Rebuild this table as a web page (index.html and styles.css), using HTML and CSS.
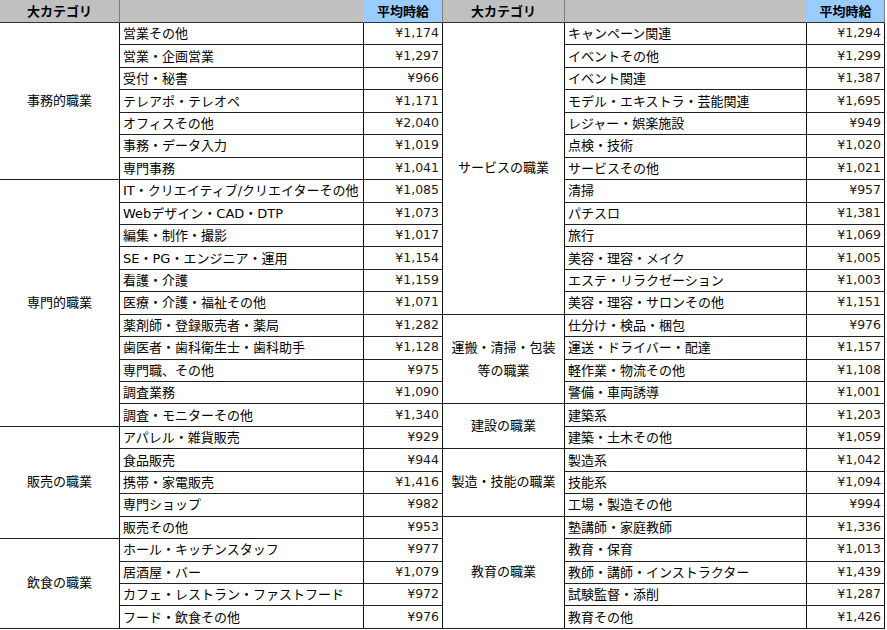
FILE: index.html
```html
<!DOCTYPE html>
<html lang="ja">
<head>
<meta charset="utf-8">
<title>平均時給</title>
<link rel="stylesheet" href="styles.css">
</head>
<body>
<div class="page">
  <div class="sheet sheet-left">
    <div class="hd hd-cat">大カテゴリ</div>
    <div class="hd hd-sub"></div>
    <div class="hd hd-pay">平均時給</div>

    <div class="grp g7">事務的職業</div>
    <div class="sub">営業その他</div><div class="pay">¥1,174</div>
    <div class="sub">営業・企画営業</div><div class="pay">¥1,297</div>
    <div class="sub">受付・秘書</div><div class="pay">¥966</div>
    <div class="sub">テレアポ・テレオペ</div><div class="pay">¥1,171</div>
    <div class="sub">オフィスその他</div><div class="pay">¥2,040</div>
    <div class="sub">事務・データ入力</div><div class="pay">¥1,019</div>
    <div class="sub">専門事務</div><div class="pay">¥1,041</div>

    <div class="grp g11">専門的職業</div>
    <div class="sub">IT・クリエイティブ/クリエイターその他</div><div class="pay">¥1,085</div>
    <div class="sub">Webデザイン・CAD・DTP</div><div class="pay">¥1,073</div>
    <div class="sub">編集・制作・撮影</div><div class="pay">¥1,017</div>
    <div class="sub">SE・PG・エンジニア・運用</div><div class="pay">¥1,154</div>
    <div class="sub">看護・介護</div><div class="pay">¥1,159</div>
    <div class="sub">医療・介護・福祉その他</div><div class="pay">¥1,071</div>
    <div class="sub">薬剤師・登録販売者・薬局</div><div class="pay">¥1,282</div>
    <div class="sub">歯医者・歯科衛生士・歯科助手</div><div class="pay">¥1,128</div>
    <div class="sub">専門職、その他</div><div class="pay">¥975</div>
    <div class="sub">調査業務</div><div class="pay">¥1,090</div>
    <div class="sub">調査・モニターその他</div><div class="pay">¥1,340</div>

    <div class="grp g5">販売の職業</div>
    <div class="sub">アパレル・雑貨販売</div><div class="pay">¥929</div>
    <div class="sub">食品販売</div><div class="pay">¥944</div>
    <div class="sub">携帯・家電販売</div><div class="pay">¥1,416</div>
    <div class="sub">専門ショップ</div><div class="pay">¥982</div>
    <div class="sub">販売その他</div><div class="pay">¥953</div>

    <div class="grp g4">飲食の職業</div>
    <div class="sub">ホール・キッチンスタッフ</div><div class="pay">¥977</div>
    <div class="sub">居酒屋・バー</div><div class="pay">¥1,079</div>
    <div class="sub">カフェ・レストラン・ファストフード</div><div class="pay">¥972</div>
    <div class="sub">フード・飲食その他</div><div class="pay">¥976</div>
  </div>

  <div class="sheet sheet-right">
    <div class="hd hd-cat">大カテゴリ</div>
    <div class="hd hd-sub"></div>
    <div class="hd hd-pay">平均時給</div>

    <div class="grp g13">サービスの職業</div>
    <div class="sub">キャンペーン関連</div><div class="pay">¥1,294</div>
    <div class="sub">イベントその他</div><div class="pay">¥1,299</div>
    <div class="sub">イベント関連</div><div class="pay">¥1,387</div>
    <div class="sub">モデル・エキストラ・芸能関連</div><div class="pay">¥1,695</div>
    <div class="sub">レジャー・娯楽施設</div><div class="pay">¥949</div>
    <div class="sub">点検・技術</div><div class="pay">¥1,020</div>
    <div class="sub">サービスその他</div><div class="pay">¥1,021</div>
    <div class="sub">清掃</div><div class="pay">¥957</div>
    <div class="sub">パチスロ</div><div class="pay">¥1,381</div>
    <div class="sub">旅行</div><div class="pay">¥1,069</div>
    <div class="sub">美容・理容・メイク</div><div class="pay">¥1,005</div>
    <div class="sub">エステ・リラクゼーション</div><div class="pay">¥1,003</div>
    <div class="sub">美容・理容・サロンその他</div><div class="pay">¥1,151</div>

    <div class="grp g4">運搬・清掃・包装<br>等の職業</div>
    <div class="sub">仕分け・検品・梱包</div><div class="pay">¥976</div>
    <div class="sub">運送・ドライバー・配達</div><div class="pay">¥1,157</div>
    <div class="sub">軽作業・物流その他</div><div class="pay">¥1,108</div>
    <div class="sub">警備・車両誘導</div><div class="pay">¥1,001</div>

    <div class="grp g2">建設の職業</div>
    <div class="sub">建築系</div><div class="pay">¥1,203</div>
    <div class="sub">建築・土木その他</div><div class="pay">¥1,059</div>

    <div class="grp g3">製造・技能の職業</div>
    <div class="sub">製造系</div><div class="pay">¥1,042</div>
    <div class="sub">技能系</div><div class="pay">¥1,094</div>
    <div class="sub">工場・製造その他</div><div class="pay">¥994</div>

    <div class="grp g5">教育の職業</div>
    <div class="sub">塾講師・家庭教師</div><div class="pay">¥1,336</div>
    <div class="sub">教育・保育</div><div class="pay">¥1,013</div>
    <div class="sub">教師・講師・インストラクター</div><div class="pay">¥1,439</div>
    <div class="sub">試験監督・添削</div><div class="pay">¥1,287</div>
    <div class="sub">教育その他</div><div class="pay">¥1,426</div>
  </div>
</div>
</body>
</html>
```

FILE: styles.css
```css
* { box-sizing: border-box; }

html, body {
  margin: 0;
  padding: 0;
  background: #ffffff;
}

body {
  font-family: "DejaVu Sans", "Noto Sans CJK JP", sans-serif;
  font-size: 13px;
  color: #000000;
}

.page {
  display: flex;
  align-items: flex-start;
  width: 887px;
  height: 630px;
  overflow: hidden;
}

.sheet {
  display: grid;
  grid-template-rows: 23px repeat(27, 22.44px);
}

.sheet-left {
  grid-template-columns: 119px 244px 79px;
}

.sheet-right {
  grid-template-columns: 122px 242px 79px;
}

.hd {
  display: flex;
  align-items: center;
  justify-content: center;
  background: #c0c0c0;
  border-bottom: 1px solid #333333;
  font-family: "Noto Sans CJK JP", sans-serif;
  font-weight: bold;
  font-size: 13px;
  color: #000000;
  padding-bottom: 1px;
}

.hd-sub {
  border-left: 1px solid #7f7f7f;
}

.hd-pay {
  background: #99ccff;
  border-left: 1px solid #99ccff;
  border-right: 1px solid #7f7f7f;
}

.sheet-left .hd-pay {
  border-right: 0;
}

.sheet-right .hd-cat {
  border-left: 1px solid #7f7f7f;
}

.grp {
  grid-column: 1;
  display: flex;
  align-items: center;
  justify-content: center;
  text-align: center;
  line-height: 23px;
  padding-bottom: 3px;
  font-family: "Noto Sans CJK JP", sans-serif;
  border-bottom: 1px solid #222222;
}

.sheet-right .grp {
  border-left: 1px solid #111111;
}

.g2 { grid-row: span 2; }
.g3 { grid-row: span 3; }
.g4 { grid-row: span 4; }
.g5 { grid-row: span 5; }
.g7 { grid-row: span 7; }
.g11 { grid-row: span 11; }
.g13 { grid-row: span 13; }

.sub {
  grid-column: 2;
  display: flex;
  align-items: center;
  padding-left: 3px;
  padding-bottom: 2px;
  white-space: nowrap;
  border-left: 1px solid #111111;
  border-bottom: 1px solid #222222;
}

.pay {
  grid-column: 3;
  display: flex;
  align-items: center;
  justify-content: flex-end;
  padding-right: 3px;
  padding-bottom: 2px;
  font-size: 12.5px;
  color: #1a1a1a;
  border-left: 1px solid #111111;
  border-bottom: 1px solid #222222;
}

.sheet-right .pay {
  border-right: 1px solid #111111;
}
```
